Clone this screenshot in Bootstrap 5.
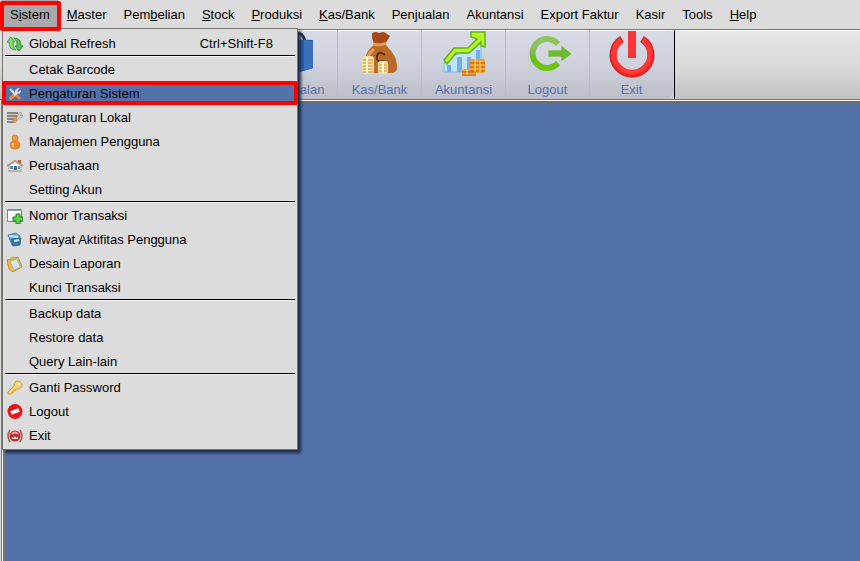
<!DOCTYPE html>
<html lang="id">
<head>
<meta charset="utf-8">
<meta name="viewport" content="width=device-width, initial-scale=1">
<title>Sistem</title>
<link href="https://cdn.jsdelivr.net/npm/bootstrap@5.3.0/dist/css/bootstrap.min.css" rel="stylesheet">
<style>
body { font: 13px/16px "Liberation Sans", Arial, sans-serif; color: #000; background: #dcdcdc; }
button { font: inherit; }
.menubar { height: 29px; padding-left: 2px; gap: 1px; }
.menubar button { padding: 0 8px; border: 0; background: none; color: #000; white-space: nowrap; }
.menubar .is-open { background: #a9a9a9; }
.marked { position: relative; }
.marked::after { content: ""; position: absolute; border: 4px solid #f00; border-radius: 2px; z-index: 5; pointer-events: none; }
.menubar .marked { z-index: 4; }
.is-open.marked::after { inset: 1px -3px -2px -2px; }
.toolstrip { height: 71px; border-top: 1px solid #77776f; border-bottom: 1px solid #77776f; padding-left: 254px; background: linear-gradient(#fff 1px, #e6e6e6 1px, #d8d8d8 55%, #c2c2c2); }
.tools { border-right: 1px solid #000; background: linear-gradient(#fff 1px, #d9dadd 1px, #c4c5c8); }
.tool { width: 84px; padding: 1px 0 0; border: 0; border-right: 1px solid #b9bdc7; background: linear-gradient(#fff 1px, #d8dbe5 1px, #cfd1dc 50%, #bbbdc7); color: #5872b0; }
.tool:last-child { border-right-color: #ced1da; border-radius: 0 8px 8px 0; }
.tool svg { width: 48px; height: 48px; margin-bottom: 3px; }
.workspace { background: #5472aa; border-left: 2px solid #77776f; border-top: 2px solid #6b6c67; }
.frame { margin-left: 1px; padding-top: 1px; padding-left: 1px; border-left: 1px solid #77776f; background: #f8f8f8; }
.drop { position: absolute; left: 2px; top: 28px; width: 296px; padding: 2px; background: #dcdcdc; border: 1px solid #77776f; box-shadow: 3px 3px 3px #1c2a45; z-index: 3; }
.entry { width: 100%; height: 24px; padding: 2px 22px 0 2px; border: 0; background: none; color: #000; text-align: left; white-space: nowrap; }
.entry svg, .entry .blank { width: 16px; height: 16px; margin-right: 6px; flex: none; }
.entry.is-current { background: #5472aa; }
.entry.marked::after { inset: 0 -3px; }
.drop hr { margin: 0; height: 2px; border: 0; opacity: 1; background: linear-gradient(#000 50%, #f4f4f4 50%); }
</style>
<script src="https://cdn.jsdelivr.net/npm/bootstrap@5.3.0/dist/js/bootstrap.bundle.min.js"></script>
</head>
<body class="d-flex flex-column vh-100 overflow-hidden position-relative">
<nav class="menubar d-flex flex-shrink-0 align-items-stretch" aria-label="Menu">
<button class="is-open marked">S<u>i</u>stem</button><button><u>M</u>aster</button><button>Pem<u>b</u>elian</button><button><u>S</u>tock</button><button><u>P</u>roduksi</button><button><u>K</u>as/Bank</button><button>Penjualan</button><button>Akuntansi</button><button>Export Faktur</button><button>Kasir</button><button>Tools</button><button><u>H</u>elp</button>
</nav>
<div class="toolstrip d-flex flex-shrink-0">
<div class="tools d-flex">
<button class="tool d-flex flex-column align-items-center"><svg viewBox="0 0 48 48"><path d="M20 11Q24-1 30 4q3 3 3 9" fill="none" stroke="#263747" stroke-width="3"/><path d="M14 8l27 1v28l-13 4-14-2z" fill="#2f5fa8"/><path d="M32 9l9 1v27l-9 3z" fill="#3a6fbe"/></svg><span>Penjualan</span></button>
<button class="tool d-flex flex-column align-items-center"><svg viewBox="0 0 48 48"><path d="M16 2q4-2 7 0l5-1 6 4-5 8H18l-2-6z" fill="#a54a17"/><path d="M18 14h12q5 5 9 12 6 17-5 16H12q-8-4-3-15 2-8 9-13z" fill="#b86a28"/><path d="M17 13q8 2 13-1M18 18q-5 4-7 9" fill="none" stroke="#e59a4d" stroke-width="3"/><path d="M29 24q-6-5-8 1-1 7 7 5" fill="none" stroke="#653011" stroke-width="2"/><rect x="6" y="25" width="12" height="18" rx="3" fill="#f5e1a0"/><rect x="22" y="30" width="10" height="13" rx="3" fill="#f5e1a0"/><path d="M7 29h10M7 32h10M7 35h10M7 38h10M7 41h10M23 34h8M23 37h8M23 40h8" stroke="#c7903d"/><path d="M11 26v16M27 31v11" stroke="#fff8cb" stroke-width="2"/></svg><span>Kas/Bank</span></button>
<button class="tool d-flex flex-column align-items-center"><svg viewBox="0 0 48 48"><path d="M4 32l13-9 12-1 12-10v29H4z" fill="#c0e4fb" stroke="#79b9ed"/><path d="M7 34h4v7H7zm10-8h5v15h-5zm10 0h4v15h-4zm9-7h4v22h-4z" fill="#72aee8"/><path d="M4 29l10-12h14l9-9-6-2V1h14v15l-4-1v-4L29 22H16L7 33z" fill="#b4f522" stroke="#62b51c" stroke-width="1.5"/><rect x="30" y="28" width="15" height="14" rx="2" fill="#f5a32e"/><rect x="22" y="38" width="14" height="7" rx="2" fill="#f5a32e"/><path d="M30 32h15M30 36h15M30 40h15M22 41h14M22 44h14" stroke="#b7551d"/><path d="M35 28v13M40 30v11M27 39v5" stroke="#ffe260"/></svg><span>Akuntansi</span></button>
<button class="tool d-flex flex-column align-items-center"><svg viewBox="0 0 48 48"><defs><linearGradient id="lg" x2="0" y2="1"><stop stop-color="#91c65d"/><stop offset=".5" stop-color="#82bc55"/><stop offset=".6" stop-color="#6bc411"/></linearGradient></defs><path d="M34 13A14.500 14.500 0 1 0 34 32" fill="none" stroke="url(#lg)" stroke-width="6"/><path d="M24 19h13v-5l11 9-11 8v-5H24z" fill="#70b936" stroke="#d5dccf" stroke-width=".7"/></svg><span>Logout</span></button>
<button class="tool d-flex flex-column align-items-center"><svg viewBox="0 0 48 48"><path d="M14 8a19 19 0 1 0 20 0" fill="none" stroke="#df2424" stroke-width="7"/><path d="M13 9a18 18 0 1 0 22 0" fill="none" stroke="#ff3735" stroke-width="5"/><path d="M20 0h8v27h-8z" fill="#f93434"/></svg><span>Exit</span></button>
</div>
</div>
<div class="frame d-flex flex-column flex-grow-1"><main class="workspace flex-grow-1"></main></div>
<div class="drop" role="menu">
<button class="entry d-flex align-items-center"><svg viewBox="0 0 16 16"><path d="M0 6l4-5 4 5H6q-1 5 3 8Q2 14 2 6z" fill="#7be064" stroke="#2c8b35" stroke-width=".8"/><path d="M16 10l-4 5-4-5h2q1-5-3-8 7 0 7 8z" fill="#55c544" stroke="#267d30" stroke-width=".8"/></svg><span>Global Refresh</span><span class="ms-auto">Ctrl+Shift-F8</span></button>
<hr>
<button class="entry d-flex align-items-center"><span class="blank"></span>Cetak Barcode</button>
<button class="entry is-current marked d-flex align-items-center"><svg viewBox="0 0 16 16"><path d="M3 3l7 7" stroke="#ddd" stroke-width="2"/><path d="M9 9l4 4" stroke="#f28324" stroke-width="3"/><path d="M13 2l-3 3 1 1 3-2q0 4-4 4l-6 6-2-2 6-6q0-4 5-4z" fill="#ddd"/><path d="M3 13l4-4" stroke="#f28324" stroke-width="3"/></svg>Pengaturan Sistem</button>
<button class="entry d-flex align-items-center"><svg viewBox="0 0 16 16"><path d="M0 3h11M0 6h10M0 9h8M0 12h6" stroke="#858585" stroke-width="2"/><path d="M0 4.500h10M0 7.500h8" stroke="#e6c49b"/><path d="M6 12l5-6q0-4 4-3l-2 2 1 1 2-1q-1 4-4 3l-4 5z" fill="#ddd" stroke="#888" stroke-width=".7"/><path d="M6 12l4-4" stroke="#ef8a35" stroke-width="3"/></svg>Pengaturan Lokal</button>
<button class="entry d-flex align-items-center"><svg viewBox="0 0 16 16"><path d="M4 14q-2-6 2-7h4q4 1 2 7-4 2-8 0z" fill="#f58a22" stroke="#d76612" stroke-width=".7"/><circle cx="8" cy="4" r="3" fill="#f79a39" stroke="#d66e1b" stroke-width=".7"/><path d="M6 9v4" stroke="#ffc46d" stroke-width="2"/></svg>Manajemen Pengguna</button>
<button class="entry d-flex align-items-center"><svg viewBox="0 0 16 16"><path d="M11 2h3v5h-3z" fill="#c85e35"/><path d="M2 7l6-4 6 4v6H2z" fill="#fff" stroke="#888" stroke-width=".7"/><path d="M0 8l8-5 8 5" fill="none" stroke="#b99576" stroke-width="2"/><path d="M3 8h3v3H3z" fill="#4f93bd"/><path d="M7 8h3v4H7z" fill="#526977"/><path d="M11 8h2v3h-2z" fill="#4f93bd"/><path d="M1 13h14" stroke="#9baa90"/></svg>Perusahaan</button>
<button class="entry d-flex align-items-center"><span class="blank"></span>Setting Akun</button>
<hr>
<button class="entry d-flex align-items-center"><svg viewBox="0 0 16 16"><path d="M.5 1.500h14v12H.5z" fill="#fff" stroke="#7b8995"/><path d="M1 2h13v1H1z" fill="#9aa8b2"/><path d="M9 6h4v3h3v4h-3v3H9v-3H6V9h3z" fill="#60ce42" stroke="#267b26"/></svg>Nomor Transaksi</button>
<button class="entry d-flex align-items-center"><svg viewBox="0 0 16 16"><path d="M1 3l8-2 4 3-1 8-7 1z" fill="#68aee1" stroke="#266b9c" stroke-width=".7"/><path d="M4 7l10-1-1 7-7 1z" fill="#367bb0" stroke="#205a83" stroke-width=".7"/><path d="M2 4l9 1M7 9l5-1" stroke="#c4e9ff" stroke-width="2"/></svg>Riwayat Aktifitas Pengguna</button>
<button class="entry d-flex align-items-center"><svg viewBox="0 0 16 16"><path d="M0 4l11-3 4 10-9 5-4-3z" fill="#f5b840" stroke="#b77c20" stroke-width=".8"/><path d="M3 5l7-2 3 8-6 3z" fill="#cfeaff" stroke="#77a9ca" stroke-width=".6"/><path d="M3 2l3-2 2 2v2L4 5z" fill="#d8b35c"/></svg>Desain Laporan</button>
<button class="entry d-flex align-items-center"><span class="blank"></span>Kunci Transaksi</button>
<hr>
<button class="entry d-flex align-items-center"><span class="blank"></span>Backup data</button>
<button class="entry d-flex align-items-center"><span class="blank"></span>Restore data</button>
<button class="entry d-flex align-items-center"><span class="blank"></span>Query Lain-lain</button>
<hr>
<button class="entry d-flex align-items-center"><svg viewBox="0 0 16 16"><path d="M1 14v-2l6-6q0-5 4-5 5 1 4 5-2 4-6 3l-1 2H6v2H4v1z" fill="#f9cd60" stroke="#cf9d49"/><circle cx="12" cy="4" r="1.500" fill="#fff"/><path d="M2 13l6-6" stroke="#fff0a6"/></svg>Ganti Password</button>
<button class="entry d-flex align-items-center"><svg viewBox="0 0 16 16"><circle cx="8" cy="7.500" r="7.500" fill="#e9131b"/><path d="M4 9l8-3" stroke="#fff" stroke-width="4"/></svg>Logout</button>
<button class="entry d-flex align-items-center"><svg viewBox="0 0 16 16"><path d="M3 2q-4 6 0 12M13 2q4 6 0 12" fill="none" stroke="#b65252" stroke-width="1.500"/><circle cx="8" cy="8" r="5.500" fill="#c42c2c"/><path d="M5 6q3-3 6 0" fill="none" stroke="#efaaaa" stroke-width="2"/><path d="M5 11V9l2 1 1-2 1 2 2-1v2z" fill="#fff"/></svg>Exit</button>
</div>
</body>
</html>
